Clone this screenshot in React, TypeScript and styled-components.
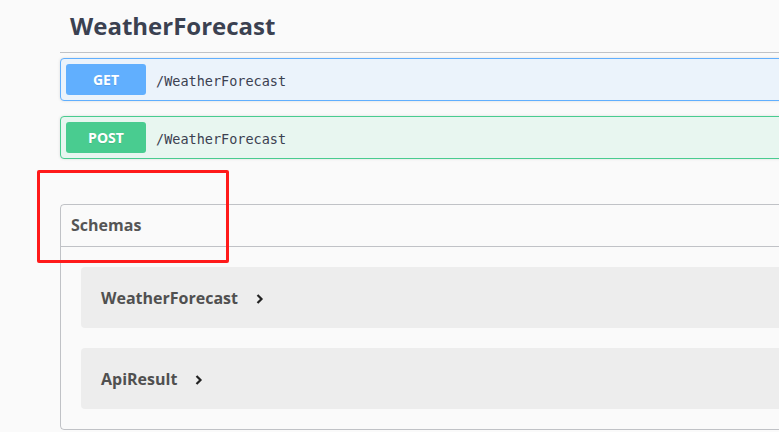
import styled, { createGlobalStyle } from "styled-components";

const GlobalStyle = createGlobalStyle`
  html, body {
    margin: 0;
    padding: 0;
    background: #fafafa;
    overflow: hidden;
  }
  body {
    font-family: "Open Sans", "Liberation Sans", sans-serif;
    color: #3b4151;
  }
`;

const Page = styled.div`
  position: relative;
  width: 779px;
  height: 432px;
  overflow: hidden;
`;

const Wrapper = styled.div`
  margin-left: 60px;
  width: 1100px;
`;

const TagTitle = styled.h4`
  margin: 0 0 5px;
  padding: 10px 20px 10px 10px;
  font-size: 24px;
  line-height: 32px;
  font-weight: 700;
  color: #3b4151;
  border-bottom: 1px solid rgba(59, 65, 81, 0.3);
`;

const Opblock = styled.div<{ $color: string; $bg: string }>`
  display: flex;
  align-items: center;
  padding: 5px;
  margin-bottom: 15px;
  border: 1px solid ${(p) => p.$color};
  background: ${(p) => p.$bg};
  border-radius: 4px;
  box-shadow: 0 0 3px rgba(0, 0, 0, 0.12);
`;

const Method = styled.span<{ $color: string }>`
  display: flex;
  align-items: center;
  justify-content: center;
  width: 80px;
  height: 31px;
  border-radius: 3px;
  background: ${(p) => p.$color};
  color: #fff;
  font-size: 14px;
  font-weight: 700;
  text-shadow: 0 1px 0 rgba(0, 0, 0, 0.1);
`;

const Path = styled.span`
  padding: 3px 10px 0;
  font-family: "DejaVu Sans Mono", "Liberation Mono", monospace;
  font-size: 13.5px;
  color: #3b4151;
`;

const Models = styled.section`
  margin-top: 45px;
  border: 1px solid rgba(59, 65, 81, 0.3);
  border-radius: 4px;
`;

const ModelsTitle = styled.h4`
  margin: 0;
  padding: 10px 20px 10px 10px;
  font-size: 16px;
  line-height: 21px;
  font-weight: 700;
  color: #555;
  border-bottom: 1px solid rgba(59, 65, 81, 0.3);
`;

const ModelList = styled.div`
  display: flex;
  flex-direction: column;
  gap: 20px;
  padding: 20px;
`;

const ModelRow = styled.div`
  display: flex;
  align-items: center;
  height: 61px;
  padding: 0 20px;
  border-radius: 4px;
  background: rgba(0, 0, 0, 0.05);
`;

const ModelName = styled.span`
  font-size: 16px;
  font-weight: 700;
  color: #505050;
`;

const Chevron = styled.svg`
  margin-left: 18px;
  margin-top: 2px;
`;

const Highlight = styled.div`
  position: absolute;
  left: 37px;
  top: 170px;
  width: 186px;
  height: 87px;
  border: 3px solid #ff1a1a;
  border-radius: 2px;
  pointer-events: none;
`;

const ops = [
  { method: "GET", color: "#61affe", bg: "#ebf3fb" },
  { method: "POST", color: "#49cc90", bg: "#e8f6f0" },
];

const schemas = ["WeatherForecast", "ApiResult"];

export default function App() {
  return (
    <Page>
      <GlobalStyle />
      <Wrapper>
        <TagTitle>WeatherForecast</TagTitle>
        {ops.map((op) => (
          <Opblock key={op.method} $color={op.color} $bg={op.bg}>
            <Method $color={op.color}>{op.method}</Method>
            <Path>/WeatherForecast</Path>
          </Opblock>
        ))}
        <Models>
          <ModelsTitle>Schemas</ModelsTitle>
          <ModelList>
            {schemas.map((name) => (
              <ModelRow key={name}>
                <ModelName>{name}</ModelName>
                <Chevron width="8" height="10" viewBox="0 0 8 10">
                  <path d="M1.5 1 L5.5 5 L1.5 9" fill="none" stroke="#222" strokeWidth="2.2" />
                </Chevron>
              </ModelRow>
            ))}
          </ModelList>
        </Models>
      </Wrapper>
      <Highlight />
    </Page>
  );
}
